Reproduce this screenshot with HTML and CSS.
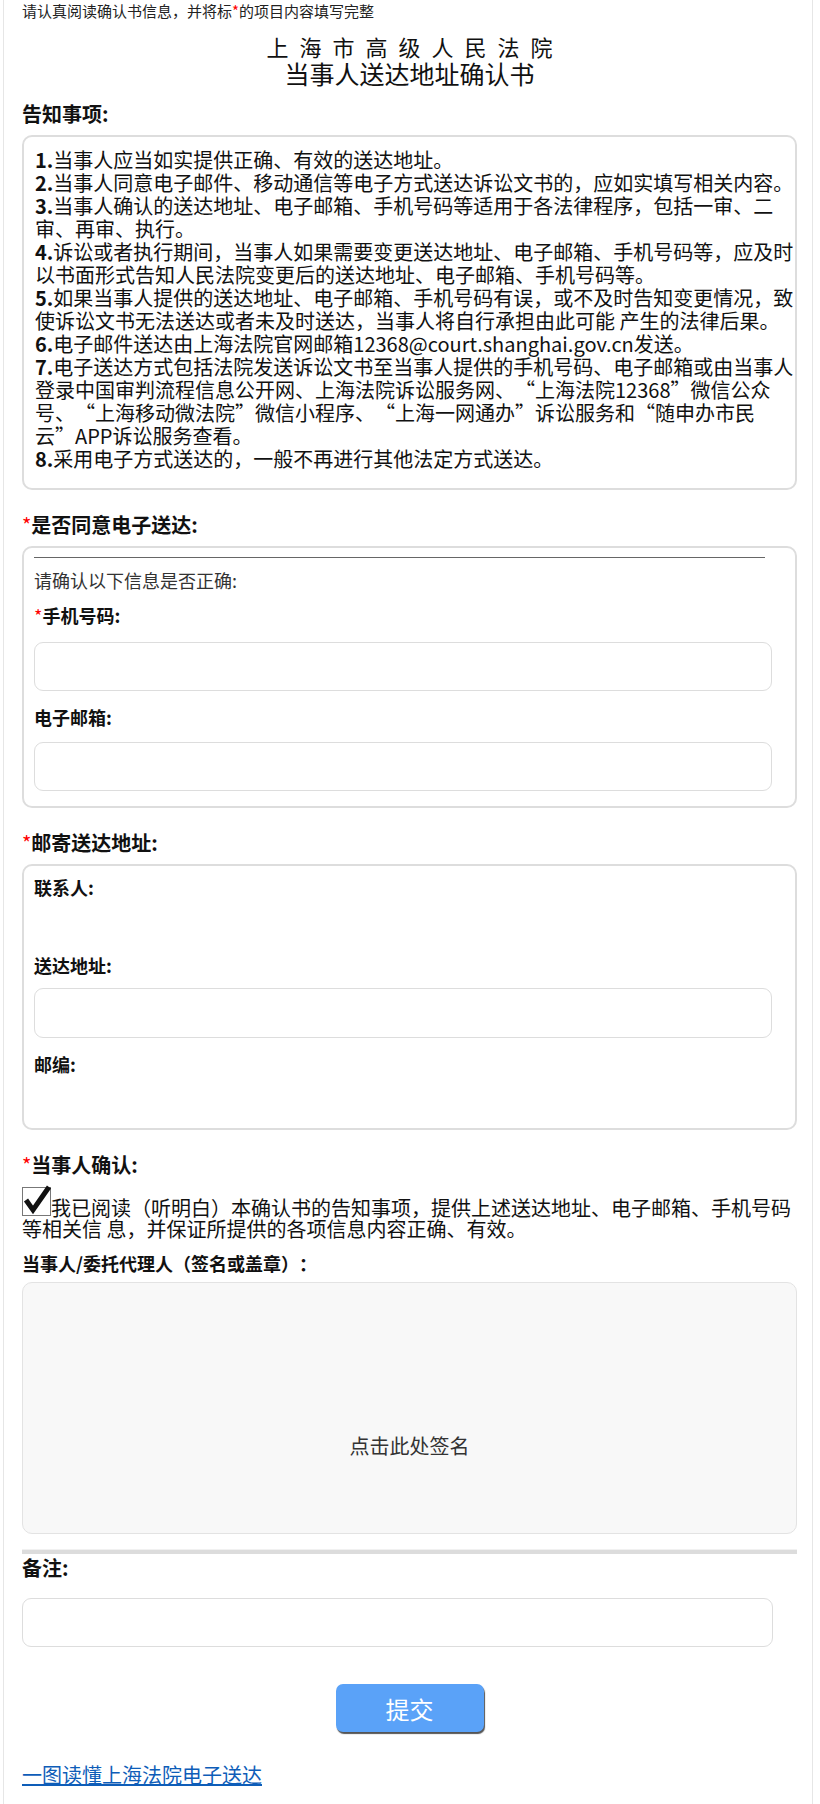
FILE: index.html
```html
<!DOCTYPE html>
<html lang="zh-CN">
<head>
    <meta charset="UTF-8">
    <meta name="viewport" content="width=device-width, initial-scale=1.0">
    <title>当事人送达地址确认书</title>
    <link rel="stylesheet" href="styles.css">
</head>
<body>
<div class="page">
    <p class="tip">请认真阅读确认书信息，并将标<span class="req">*</span>的项目内容填写完整</p>

    <div class="title">
        <div class="court">上海市高级人民法院</div>
        <div class="doc">当事人送达地址确认书</div>
    </div>

    <h2 class="sec-title first">告知事项:</h2>
    <div class="notice">
        <p><b>1.</b>当事人应当如实提供正确、有效的送达地址。</p>
        <p><b>2.</b>当事人同意电子邮件、移动通信等电子方式送达诉讼文书的，应如实填写相关内容。</p>
        <p><b>3.</b>当事人确认的送达地址、电子邮箱、手机号码等适用于各法律程序，包括一审、二审、再审、执行。</p>
        <p><b>4.</b>诉讼或者执行期间，当事人如果需要变更送达地址、电子邮箱、手机号码等，应及时以书面形式告知人民法院变更后的送达地址、电子邮箱、手机号码等。</p>
        <p><b>5.</b>如果当事人提供的送达地址、电子邮箱、手机号码有误，或不及时告知变更情况，致使诉讼文书无法送达或者未及时送达，当事人将自行承担由此可能 产生的法律后果。</p>
        <p><b>6.</b>电子邮件送达由上海法院官网邮箱12368@court.shanghai.gov.cn发送。</p>
        <p><b>7.</b>电子送达方式包括法院发送诉讼文书至当事人提供的手机号码、电子邮箱或由当事人登录中国审判流程信息公开网、上海法院诉讼服务网、“上海法院12368”微信公众号、“上海移动微法院”微信小程序、“上海一网通办”诉讼服务和“随申办市民云”APP诉讼服务查看。</p>
        <p><b>8.</b>采用电子方式送达的，一般不再进行其他法定方式送达。</p>
    </div>

    <h2 class="sec-title"><span class="req">*</span>是否同意电子送达:</h2>
    <div class="box">
        <hr class="rule">
        <p class="hint">请确认以下信息是否正确:</p>
        <label class="field-label"><span class="req">*</span>手机号码:</label>
        <input class="text-input" type="text">
        <label class="field-label">电子邮箱:</label>
        <input class="text-input" type="text">
        <div class="box-end"></div>
    </div>

    <h2 class="sec-title"><span class="req">*</span>邮寄送达地址:</h2>
    <div class="box post">
        <label class="field-label">联系人:</label>
        <div class="value"></div>
        <label class="field-label">送达地址:</label>
        <input class="text-input" type="text">
        <label class="field-label">邮编:</label>
        <div class="value"></div>
    </div>

    <h2 class="sec-title"><span class="req">*</span>当事人确认:</h2>
    <p class="agree">
        <span class="check">
            <svg class="tick" width="30" height="30" viewBox="0 0 30 30">
                <path d="M3 15 L10 25 L26 2" fill="none" stroke="#111" stroke-width="5" stroke-linejoin="miter"/>
            </svg>
        </span>我已阅读（听明白）本确认书的告知事项，提供上述送达地址、电子邮箱、手机号码等相关信 息，并保证所提供的各项信息内容正确、有效。
    </p>
    <label class="field-label sign-label">当事人/委托代理人（签名或盖章）：</label>
    <div class="sign-pad">点击此处签名</div>

    <div class="divider"></div>
    <h2 class="sec-title remark">备注:</h2>
    <input class="text-input remark-input" type="text">

    <div class="actions">
        <button class="submit-btn" type="button">提交</button>
    </div>

    <a class="guide-link" href="#">一图读懂上海法院电子送达</a>
</div>
</body>
</html>
```

FILE: styles.css
```css
body {
    margin: 0;
    font-family: "Noto Sans CJK SC", sans-serif;
    color: #111;
    background: #fff;
    text-spacing-trim: space-all;
}

.page {
    box-sizing: border-box;
    width: 810px;
    min-height: 100vh;
    margin-left: 3px;
    padding: 0 15px 0 18px;
    border-left: 1px solid #e6e6e6;
    border-right: 1px solid #e6e6e6;
}

.req {
    color: #f00;
    font-weight: normal;
}

.tip {
    margin: 0;
    font-size: 15px;
    line-height: 22px;
    color: #222;
}

.title {
    margin-top: 11px;
    text-align: center;
}

.court {
    font-size: 22px;
    line-height: 26px;
    letter-spacing: 11px;
    padding-left: 11px;
}

.doc {
    font-size: 25px;
    line-height: 28px;
}

.sec-title {
    margin: 22px 0 8px;
    font-size: 20px;
    line-height: 26px;
    font-weight: bold;
}

.sec-title.first {
    margin-top: 14px;
}

.notice {
    border: 2px solid #ddd;
    border-radius: 10px;
    padding: 11px 1px 18px 11px;
}

.notice p {
    margin: 0;
    font-size: 20px;
    line-height: 23px;
}

.box {
    border: 2px solid #ddd;
    border-radius: 10px;
    padding: 0 23px 0 10px;
}

.rule {
    margin: 9px 7px 10px 0;
    border: none;
    border-top: 1px solid #666;
}

.hint {
    margin: 0;
    font-size: 18px;
    line-height: 24px;
    color: #333;
}

.field-label {
    display: block;
    margin-top: 11px;
    font-size: 18px;
    line-height: 24px;
    font-weight: bold;
}

.text-input {
    display: block;
    box-sizing: border-box;
    width: 100%;
    height: 49px;
    margin-top: 15px;
    border: 1px solid #ddd;
    border-radius: 9px;
    background: #fff;
    font-size: 18px;
    font-family: inherit;
    outline: none;
}

.box .field-label + .text-input + .field-label {
    margin-top: 14px;
}

.box .field-label + .text-input + .field-label + .text-input {
    margin-top: 13px;
}

.box-end {
    height: 15px;
}

.post {
    padding-top: 9px;
    padding-bottom: 12px;
}

.post .field-label {
    margin-top: 14px;
}

.post .field-label:first-child {
    margin-top: 0;
}

.post .text-input {
    margin-top: 11px;
    height: 50px;
}

.post .text-input + .field-label {
    margin-top: 15px;
}

.value {
    height: 40px;
}

.agree {
    margin: 9px 0 0;
    font-size: 20px;
    line-height: 21px;
}

.check {
    position: relative;
    display: inline-block;
    box-sizing: border-box;
    width: 29px;
    height: 29px;
    border: 1px solid #777;
    background: #fff;
}

.tick {
    position: absolute;
    left: 0;
    top: -3px;
}

.sign-label {
    margin-top: 12px;
}

.sign-pad {
    box-sizing: border-box;
    height: 252px;
    margin-top: 7px;
    padding-top: 150px;
    border: 1px solid #e3e3e3;
    border-radius: 10px;
    background: #f8f8f8;
    text-align: center;
    font-size: 20px;
    line-height: 26px;
    color: #333;
    cursor: pointer;
}

.divider {
    height: 4px;
    margin-top: 15px;
    background: #dcdcdc;
    border-top: 1px solid #f1f1f1;
}

.sec-title.remark {
    margin: 1px 0 0;
}

.remark-input {
    width: 751px;
    margin-top: 17px;
}

.actions {
    margin-top: 37px;
    text-align: center;
}

.submit-btn {
    width: 148px;
    height: 48px;
    border: none;
    border-radius: 7px;
    background: #5aa2f8;
    box-shadow: 1px 2px 1px #555;
    color: #fff;
    font-size: 24px;
    font-family: inherit;
    cursor: pointer;
}

.guide-link {
    display: inline-block;
    margin-top: 30px;
    font-size: 20px;
    line-height: 26px;
    color: #0e5db8;
}
```
